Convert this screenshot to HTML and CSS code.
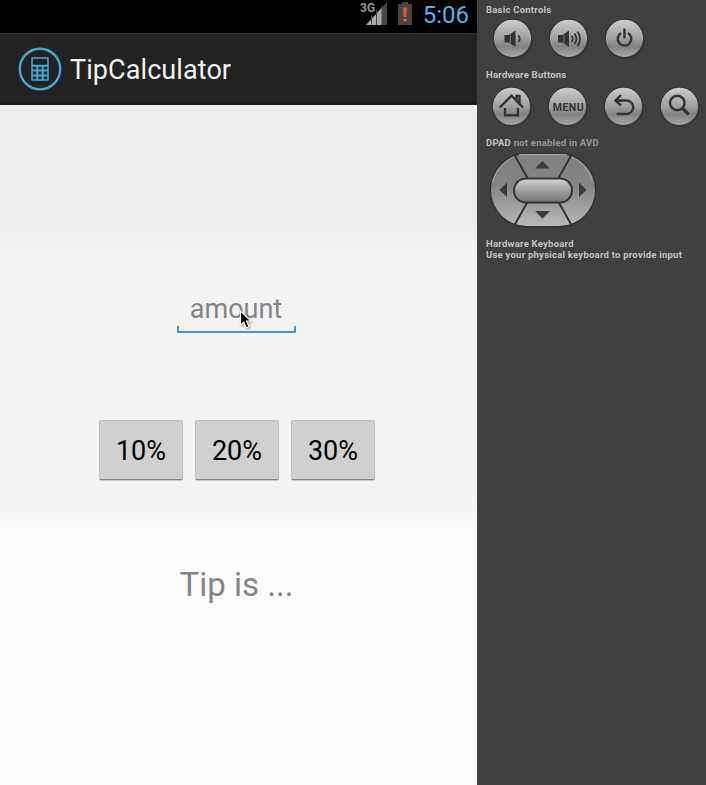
FILE: index.html
```
<!DOCTYPE html>
<html lang="en">
<head>
<meta charset="utf-8">
<title>TipCalculator</title>
<link rel="stylesheet" href="styles.css">
</head>
<body>
<svg class="defs" aria-hidden="true">
  <defs>
    <linearGradient id="metal" x1="0" y1="0" x2="0" y2="1"><stop offset="0" stop-color="#cdcdcd"/><stop offset=".5" stop-color="#a0a0a0"/><stop offset=".72" stop-color="#828282"/><stop offset="1" stop-color="#a9a9a9"/></linearGradient>
    <linearGradient id="pad" x1="0" y1="0" x2="0" y2="1"><stop offset="0" stop-color="#808080"/><stop offset=".45" stop-color="#858585"/><stop offset="1" stop-color="#bababa"/></linearGradient>
    <linearGradient id="pill" x1="0" y1="0" x2="0" y2="1"><stop offset="0" stop-color="#d2d2d2"/><stop offset=".6" stop-color="#969696"/><stop offset="1" stop-color="#777"/></linearGradient>
    <g id="disc"><circle cx="22.8" cy="22.8" r="20.3" fill="#353535"/><circle cx="22.5" cy="22.3" r="18.6" fill="url(#metal)"/></g>
  </defs>
</svg>
<main class="phone">
  <div class="status">
    <svg class="signal" width="30" height="28" viewBox="0 0 30 28">
      <path d="M5 25 26 2V25Z" fill="#484848"/><path d="M5 25 21 7.5V25Z" fill="#aaa"/>
      <path d="M10.5 15V25M15.5 10V25M21 5V25" stroke="#444" stroke-width="1"/>
      <text x="-1" y="12" class="net">3G</text>
    </svg>
    <svg class="battery" width="16" height="26" viewBox="0 0 16 26">
      <path d="M1 4H5V2H11V4H15V25H1Z" fill="#454545"/><path d="M6.2 7.5H9.8L9.3 17H6.7ZM6.3 18.7H9.7V21.5H6.3Z" fill="#f4512c"/>
    </svg>
    <span class="clock">5:06</span>
  </div>
  <header class="bar">
    <svg class="logo" width="44" height="44" viewBox="0 0 44 44" fill="none" stroke="#45a9d8">
      <circle cx="22" cy="22" r="20.2" stroke-width="2.4"/><rect x="14" y="11" width="16" height="22" rx=".5" stroke-width="1.6"/>
      <path d="M14 18.7H30M14 23.6H30M14 28.4H30M19.3 18V33M24.7 18V33" stroke-width="2"/>
    </svg>
    <h1 class="title">TipCalculator</h1>
  </header>
  <section class="content">
    <div class="amount">amount
      <svg class="cursor" width="15" height="20" viewBox="0 0 15 20"><path d="M1.5 1V15.2L4.8 12 7.2 17.7 10 16.5 7.5 11H12Z" fill="#000" stroke="#fff" stroke-width="1.1"/></svg>
    </div>
    <div class="tips"><button>10%</button><button>20%</button><button>30%</button></div>
    <p class="result">Tip is ...</p>
  </section>
</main>
<aside class="panel">
  <h2>Basic Controls</h2>
  <div class="row basic">
    <svg viewBox="0 0 45 45"><use href="#disc"/><path d="M14.5 19H19L25.5 14.5V31L19 26.5H14.5Z" fill="#333"/><path d="M20.5 19V27" stroke="#777"/><path d="M28.5 19.5Q31 22.7 28.5 26" class="line thin"/></svg>
    <svg viewBox="0 0 45 45"><use href="#disc"/><path d="M12 19H16.5L23 14.5V31L16.5 26.5H12Z" fill="#333"/><path d="M18 19V27" stroke="#777"/><path d="M25.5 19.5Q28 22.7 25.5 26M28.5 17.5Q32.3 22.7 28.5 28M31.5 15.5Q36.5 22.7 31.5 30" class="line thin"/></svg>
    <svg viewBox="0 0 45 45"><use href="#disc"/><path d="M19 17A6.8 6.8 0 1 0 26 17M22.5 12.5V22.5" class="line"/></svg>
  </div>
  <h2>Hardware Buttons</h2>
  <div class="row hardware">
    <svg viewBox="0 0 45 45"><use href="#disc"/><path d="M10.7 23.5 22.5 11.7 34 23.5M27.5 16.5V12H30.5V20M16 24V31.3H29V24" class="line"/></svg>
    <svg viewBox="0 0 45 45"><use href="#disc"/><text x="23.2" y="27" class="menu" textLength="31" lengthAdjust="spacing">MENU</text></svg>
    <svg viewBox="0 0 45 45"><use href="#disc"/><path d="M20 11 14.5 16.5 20 21.5M15 16.5H25.5A6.7 6.7 0 0 1 25.5 30H15.5" class="line"/></svg>
    <svg viewBox="0 0 45 45"><use href="#disc"/><circle cx="20.3" cy="19" r="7.3" class="line"/><path d="M25.6 24.3 31.8 30.3" class="line thick"/></svg>
  </div>
  <h2>DPAD <span>not enabled in AVD</span></h2>
  <svg class="dpad" width="110" height="78" viewBox="0 0 110 78">
    <rect x="1.5" y="1" width="107" height="76" rx="38" fill="#333"/>
    <rect x="3" y="3" width="104" height="72" rx="36" fill="url(#pad)"/>
    <path d="M27 5Q9 14 4.5 31M31 3.7H79M82 5Q99 13 104 29" fill="none" stroke="#aaa"/>
    <path d="M26 3 40 28M84 3 70 28M26 75 40 50M84 75 70 50" stroke="#333" stroke-width="2"/>
    <rect x="25" y="26.5" width="60" height="26" rx="13" fill="#333"/><rect x="27" y="28.5" width="56" height="22" rx="11" fill="url(#pill)"/>
    <path d="M47 17.5 54.5 10 62 17.5ZM47 60H62L54.5 67.5ZM19 31.5V46L11.5 39ZM91 31.5V46L98.5 39Z" fill="#3a3a3a"/>
  </svg>
  <h2 class="keyboard">Hardware Keyboard</h2>
  <p class="hint">Use your physical keyboard to provide input</p>
</aside>
</body>
</html>
```
FILE: styles.css
```
* { box-sizing: border-box; }
body { margin: 0; display: flex; width: 706px; height: 785px; overflow: hidden; background: #404040; font-family: Roboto, sans-serif; }
h1, h2, p { margin: 0; }
svg { display: block; flex: none; }
.defs { position: absolute; width: 0; height: 0; }
.phone { width: 477px; display: flex; flex-direction: column; }
.status { height: 33px; background: #000; display: flex; justify-content: flex-end; align-items: flex-start; padding-right: 8px; }
.signal { margin-right: 6px; overflow: visible; }
.net { font: bold 12px Roboto, sans-serif; fill: #929292; stroke: #000; stroke-width: 2px; paint-order: stroke; }
.battery { margin-right: 10px; }
.clock { font-size: 24px; line-height: 30px; color: #52b5e5; }
.bar { height: 72px; background: #222; border-top: 1px solid #303030; border-bottom: 3px solid #191919; display: flex; align-items: center; padding: 2px 0 0 18px; }
.title { margin: 2px 0 0 8px; font-size: 27px; line-height: 32px; font-weight: 400; letter-spacing: .08px; color: #f3f3f3; }
.content { flex: 1; display: flex; flex-direction: column; align-items: center; padding-right: 3px; background: linear-gradient(#ececec 0, #ececec 120px, #f3f3f3 151px, #f3f3f3 396px, #fbfbfb 425px); }
.amount { position: relative; width: 119px; height: 41px; margin: 187px 2px 0 0; font-size: 27px; line-height: 34px; text-align: center; color: #858585; border-bottom: 2px solid #4099ca; }
.amount::before, .amount::after { content: ""; position: absolute; bottom: 0; width: 2px; height: 5px; background: #4099ca; }
.amount::before { left: 0; }
.amount::after { right: 0; }
.cursor { position: absolute; left: 62px; top: 18px; filter: drop-shadow(1px 1px 1px #0006); }
.tips { display: flex; gap: 12px; margin-top: 87px; }
.tips button { width: 84px; height: 60px; padding: 2px 0 0; border: 1px solid #c2c2c2; border-bottom: 1px solid #858585; border-radius: 2px; background: #d0d0d0; color: #000; font: 27px/56px Roboto, sans-serif; box-shadow: 0 1px 1px #ccc; }
.result { margin: 85px 1px 0 0; font-size: 33px; line-height: 40px; color: #858585; }
.panel { width: 229px; padding: 4px 0 0 9px; color: #c2c2c2; }
.panel h2, .hint { font-size: 9.5px; line-height: 12px; font-weight: 700; letter-spacing: .235px; white-space: nowrap; }
.panel h2 span { color: #969696; }
.row { display: flex; gap: 11px; }
.row svg { width: 45px; height: 45px; }
.basic { margin: 0 0 8px 4px; }
.hardware { margin: 3px 0 8px 3px; }
.line { fill: none; stroke: #333; stroke-width: 2.4px; }
.thin { stroke-width: 1.8px; }
.thick { stroke-width: 3.2px; }
.menu { font: bold 10.5px Roboto, sans-serif; fill: #333; text-anchor: middle; }
.dpad { margin: 2px 0 0 2px; }
.panel .keyboard { margin-top: 9px; }
.panel .hint { line-height: 10px; }
```
